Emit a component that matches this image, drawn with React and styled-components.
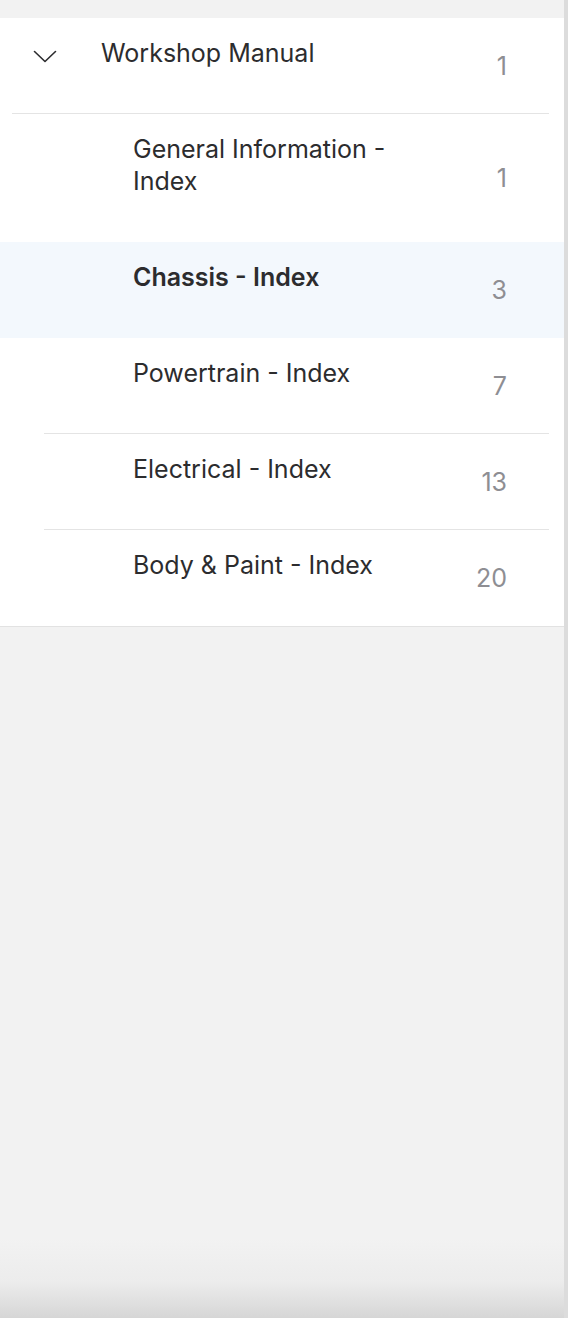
import styled, { createGlobalStyle } from 'styled-components'

const GlobalStyle = createGlobalStyle`
  html, body {
    margin: 0;
    padding: 0;
    background: #f2f2f2;
  }
  body {
    font-family: Inter, "Liberation Sans", Arial, sans-serif;
    -webkit-font-smoothing: antialiased;
  }
`

const chapters = [
  { title: 'General Information - Index', page: 1, divider: false },
  { title: 'Chassis - Index', page: 3, active: true, divider: false },
  { title: 'Powertrain - Index', page: 7, divider: true },
  { title: 'Electrical - Index', page: 13, divider: true },
  { title: 'Body & Paint - Index', page: 20, divider: false },
]

const Chevron = () => (
  <svg width="24" height="13" viewBox="0 0 24 13" fill="none">
    <path d="M1.5 1.5 L12 11.5 L22.5 1.5" stroke="#2c2c2e" strokeWidth="1.6" strokeLinecap="round" strokeLinejoin="round" />
  </svg>
)

const App = () => {
  return (
    <>
      <GlobalStyle />
      <Page>
        <Main>
          <Panel>
            <Row $inset={12} $divider>
              <Toggle>
                <Chevron />
              </Toggle>
              <Title>Workshop Manual</Title>
              <PageNo>1</PageNo>
            </Row>
            {chapters.map((c) => (
              <Row key={c.title} $inset={44} $divider={c.divider} $active={c.active}>
                <Title $child $bold={c.active}>{c.title}</Title>
                <PageNo>{c.page}</PageNo>
              </Row>
            ))}
          </Panel>
          <Filler />
          <Shade />
        </Main>
        <Track />
      </Page>
    </>
  )
}

const Page = styled.div`
  display: flex;
  min-height: 100vh;
`

const Main = styled.div`
  flex: 1;
  display: flex;
  flex-direction: column;
  padding-top: 18px;
`

const Track = styled.div`
  width: 4px;
  background: #dcdcdc;
`

const Panel = styled.ul`
  list-style: none;
  margin: 0;
  padding: 0;
  background: #ffffff;
  border-bottom: 1px solid #e2e2e2;
`

const Row = styled.li`
  position: relative;
  display: flex;
  align-items: center;
  min-height: 96px;
  padding-right: 57px;
  box-sizing: border-box;
  background: ${({ $active }) => ($active ? '#f3f8fd' : '#ffffff')};

  &::after {
    content: '';
    display: ${({ $divider }) => ($divider ? 'block' : 'none')};
    position: absolute;
    left: ${({ $inset }) => $inset}px;
    right: 15px;
    bottom: 0;
    height: 1px;
    background: #e4e4e4;
  }
`

const Toggle = styled.span`
  width: 101px;
  align-self: flex-start;
  padding-top: 32px;
  padding-left: 33px;
  box-sizing: border-box;
  display: flex;
`

const Title = styled.span`
  flex: 1;
  align-self: flex-start;
  padding: 19px 0 45px;
  padding-left: ${({ $child }) => ($child ? '133px' : '0')};
  padding-right: ${({ $child }) => ($child ? '80px' : '0')};
  font-size: 25px;
  line-height: 32px;
  font-weight: ${({ $bold }) => ($bold ? 600 : 400)};
  color: #2c2c2e;
`

const PageNo = styled.span`
  font-size: 25px;
  line-height: 32px;
  color: #8e8e93;
  text-align: right;
  min-width: 30px;
`

const Filler = styled.div`
  flex: 1;
`

const Shade = styled.div`
  height: 80px;
  background: linear-gradient(to bottom, #f2f2f2 0%, #ececec 55%, #d6d6d6 100%);
`

export default App
